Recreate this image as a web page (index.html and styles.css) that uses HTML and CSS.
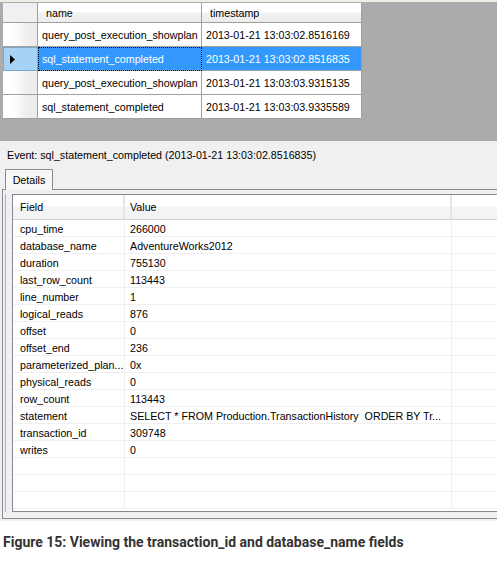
FILE: index.html
```html
<!DOCTYPE html>
<html>
<head>
<meta charset="utf-8">
<link rel="stylesheet" href="styles.css">
</head>
<body>
<div class="screen">
  <div class="grid-area">
    <div class="grid">
      <div class="corner"></div>
      <div class="hdr">name</div>
      <div class="hdr">timestamp</div>

      <div class="rh"></div>
      <div class="cell">query_post_execution_showplan</div>
      <div class="cell">2013-01-21 13:03:02.8516169</div>

      <div class="rh rh-sel"><svg class="arrow" width="5" height="9" viewBox="0 0 5 9"><path d="M0 0 L5 4.5 L0 9 Z" fill="#000"/></svg></div>
      <div class="cell sel focus">sql_statement_completed</div>
      <div class="cell sel">2013-01-21 13:03:02.8516835</div>

      <div class="rh"></div>
      <div class="cell">query_post_execution_showplan</div>
      <div class="cell">2013-01-21 13:03:03.9315135</div>

      <div class="rh"></div>
      <div class="cell">sql_statement_completed</div>
      <div class="cell">2013-01-21 13:03:03.9335589</div>
    </div>
  </div>

  <div class="event-pane">
    <div class="event-label">Event: sql_statement_completed (2013-01-21 13:03:02.8516835)</div>
    <div class="tabs"><div class="tab">Details</div></div>
    <div class="panel">
      <div class="panel-body">
        <div class="table">
          <div class="thead">
            <div class="th">Field</div>
            <div class="th">Value</div>
            <div class="th"></div>
          </div>
          <div class="tr"><div class="td">cpu_time</div><div class="td">266000</div><div class="td"></div></div>
          <div class="tr"><div class="td">database_name</div><div class="td">AdventureWorks2012</div><div class="td"></div></div>
          <div class="tr"><div class="td">duration</div><div class="td">755130</div><div class="td"></div></div>
          <div class="tr"><div class="td">last_row_count</div><div class="td">113443</div><div class="td"></div></div>
          <div class="tr"><div class="td">line_number</div><div class="td">1</div><div class="td"></div></div>
          <div class="tr"><div class="td">logical_reads</div><div class="td">876</div><div class="td"></div></div>
          <div class="tr"><div class="td">offset</div><div class="td">0</div><div class="td"></div></div>
          <div class="tr"><div class="td">offset_end</div><div class="td">236</div><div class="td"></div></div>
          <div class="tr"><div class="td">parameterized_plan...</div><div class="td">0x</div><div class="td"></div></div>
          <div class="tr"><div class="td">physical_reads</div><div class="td">0</div><div class="td"></div></div>
          <div class="tr"><div class="td">row_count</div><div class="td">113443</div><div class="td"></div></div>
          <div class="tr"><div class="td">statement</div><div class="td pre">SELECT * FROM Production.TransactionHistory  ORDER BY Tr...</div><div class="td"></div></div>
          <div class="tr"><div class="td">transaction_id</div><div class="td">309748</div><div class="td"></div></div>
          <div class="tr"><div class="td">writes</div><div class="td">0</div><div class="td"></div></div>
          <div class="tr"><div class="td"></div><div class="td"></div><div class="td"></div></div>
          <div class="tr"><div class="td"></div><div class="td"></div><div class="td"></div></div>
          <div class="tr"><div class="td"></div><div class="td"></div><div class="td"></div></div>
        </div>
      </div>
    </div>
  </div>

  <p class="caption">Figure 15: Viewing the transaction_id and database_name fields</p>
</div>
</body>
</html>
```

FILE: styles.css
```css
* { box-sizing: border-box; }
html, body { margin: 0; padding: 0; background: #fff; }
body { font-family: "Liberation Sans", Arial, sans-serif; font-size: 10.7px; color: #000; }

.screen { width: 497px; overflow: hidden; }

.grid-area {
  background: #ababab;
  border-top: 2px solid #efeee6;
  height: 141px;
  padding: 1px 0 0 3px;
}
.grid {
  display: grid;
  grid-template-columns: 35px 164px 160px;
  grid-template-rows: 20px repeat(4, 24px);
}
.grid > div {
  border-right: 1px solid #a0a0a0;
  border-bottom: 1px solid #a0a0a0;
  display: flex;
  align-items: center;
  white-space: nowrap;
  overflow: hidden;
}
.corner { background: #f0f0f0; }
.hdr {
  background: linear-gradient(#ffffff 0%, #ffffff 45%, #f2f2f2 55%, #ececec 100%);
  padding-left: 8px;
}
.rh { background: linear-gradient(to right, #ffffff 30%, #eeeeee 70%, #ececec 100%); }
.rh-sel {
  background: #a6d2f5;
  border: 1px solid #7fa8c8 !important;
  padding-left: 6px;
}
.arrow { display: block; }
.cell { background: #fff; padding-left: 4px; }
.cell.sel { background: #3399ff; color: #fff; }
.cell.focus { outline: 1px dotted #000; outline-offset: -1px; padding-left: 4px; }

.event-pane {
  background: #f0f0f0;
  padding: 7px 0 2px 2px;
}
.event-label { height: 14px; line-height: 14px; padding-left: 5px; white-space: nowrap; }
.tabs { display: flex; margin-top: 7px; padding-left: 3px; }
.tab {
  position: relative;
  width: 48px;
  height: 21px;
  margin-bottom: -1px;
  border: 1px solid #898c95;
  border-bottom: none;
  background: #f7f7f7;
  display: flex;
  align-items: center;
  justify-content: center;
  padding-bottom: 1px;
}
.panel {
  border: 1px solid #898c95;
  border-right: none;
  padding: 4px 0 6px 2px;
}
.panel-body {
  border-left: 1px solid #b4b4b4;
  padding-left: 6px;
}
.table {
  border: 1px solid #828790;
  border-right: none;
  background: #fff;
  height: 318px;
  overflow: hidden;
}
.thead, .tr {
  display: grid;
  grid-template-columns: 112px 327px 1fr;
}
.thead {
  height: 25px;
  border-bottom: 1px solid #d5d5d5;
  background: linear-gradient(#ffffff 0%, #ffffff 45%, #f3f4f6 50%, #f3f4f6 100%);
}
.th {
  display: flex;
  align-items: center;
  padding-left: 7px;
  border-right: 2px solid #e5e5e5;
}
.th:nth-child(2) { padding-left: 5px; }
.th:last-child { border-right: none; }
.tr { height: 17px; border-bottom: 1px solid #f0f0f0; }
.td {
  display: flex;
  align-items: center;
  padding-left: 7px;
  padding-top: 1px;
  white-space: nowrap;
  overflow: hidden;
  border-right: 1px solid #f0f0f0;
}
.td:nth-child(2) { padding-left: 5px; }
.td:last-child { border-right: none; }
.pre { white-space: pre; }

.caption {
  margin: 13px 0 0 3px;
  font-family: Roboto, "Liberation Sans", sans-serif;
  font-weight: 700;
  font-size: 14px;
  color: #333;
  white-space: nowrap;
}
```
